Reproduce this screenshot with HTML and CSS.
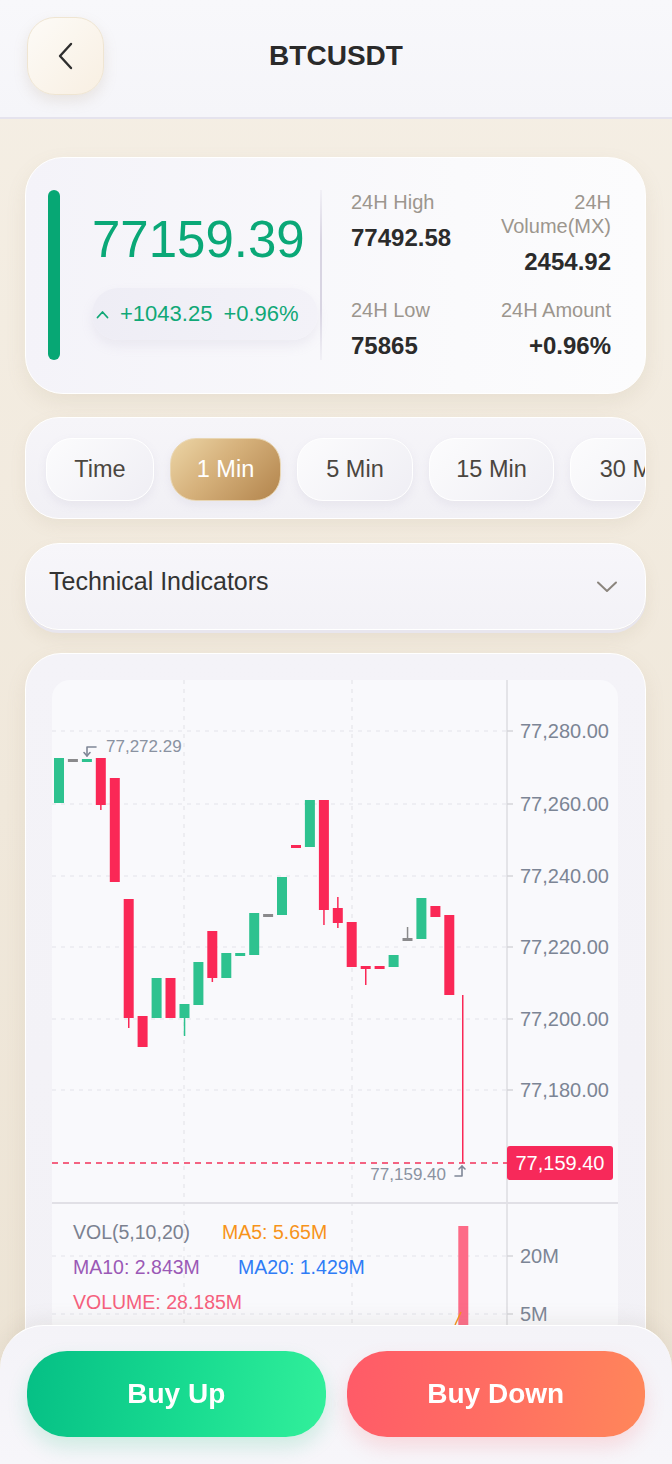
FILE: index.html
```html
<!DOCTYPE html>
<html lang="en">
  <head>
    <meta charset="UTF-8" />
    <meta name="viewport" content="width=device-width, initial-scale=1.0" />
    <title>BTCUSDT</title>
    <link rel="stylesheet" href="styles.css">
  </head>
  <body>
    <header class="topbar">
      <button class="back-btn">
        <svg width="16" height="28" viewBox="0 0 16 28"><polyline points="13,2 2,14 13,26" fill="none" stroke="#2e2e2e" stroke-width="2.4" stroke-linecap="round" stroke-linejoin="round"/></svg>
      </button>
      <h1 class="title">BTCUSDT</h1>
      <span></span>
    </header>

    <main class="page">
      <section class="price-card">
        <div class="trend-bar"></div>
        <div class="price-main">
          <div class="price">77159.39</div>
          <div class="change-pill">
            <svg width="13" height="9" viewBox="0 0 13 9"><polyline points="1.5,7.5 6.5,2 11.5,7.5" fill="none" stroke="#10a877" stroke-width="1.8" stroke-linecap="round" stroke-linejoin="round"/></svg>
            <span>+1043.25</span>
            <span>+0.96%</span>
          </div>
        </div>
        <div class="divider"></div>
        <div class="stats">
          <div class="stat">
            <div class="stat-label">24H High</div>
            <div class="stat-value">77492.58</div>
          </div>
          <div class="stat stat-right">
            <div class="stat-label">24H<br>Volume(MX)</div>
            <div class="stat-value">2454.92</div>
          </div>
          <div class="stat">
            <div class="stat-label">24H Low</div>
            <div class="stat-value">75865</div>
          </div>
          <div class="stat stat-right">
            <div class="stat-label">24H Amount</div>
            <div class="stat-value">+0.96%</div>
          </div>
        </div>
      </section>

      <section class="tabs-card">
        <div class="tabs">
          <span class="tab tab-time">Time</span>
          <span class="tab tab-1m tab-active">1 Min</span>
          <span class="tab tab-5m">5 Min</span>
          <span class="tab tab-15m">15 Min</span>
          <span class="tab tab-30m">30 Min</span>
        </div>
      </section>

      <section class="indicator-card">
        <span class="indicator-text">Technical Indicators</span>
        <svg width="22" height="14" viewBox="0 0 22 14"><polyline points="2,2.5 11,11 20,2.5" fill="none" stroke="#8b857d" stroke-width="2" stroke-linecap="round" stroke-linejoin="round"/></svg>
      </section>

      <section class="chart-card">
        <svg class="chart" width="566" height="660" viewBox="0 0 566 660">
          <rect x="0" y="0" width="566" height="660" rx="18" fill="#f9f9fc"/>

          <!-- grid -->
          <g stroke="#e4e4ea" stroke-width="1.2" stroke-dasharray="4 5">
            <line x1="0" y1="51" x2="455" y2="51"/>
            <line x1="0" y1="124" x2="455" y2="124"/>
            <line x1="0" y1="196" x2="455" y2="196"/>
            <line x1="0" y1="267" x2="455" y2="267"/>
            <line x1="0" y1="339" x2="455" y2="339"/>
            <line x1="0" y1="410" x2="455" y2="410"/>
            <line x1="0" y1="576" x2="455" y2="576"/>
            <line x1="0" y1="634" x2="455" y2="634"/>
            <line x1="132" y1="0" x2="132" y2="660"/>
            <line x1="300" y1="0" x2="300" y2="660"/>
          </g>
          <line x1="455" y1="0" x2="455" y2="660" stroke="#dddce2" stroke-width="1.5"/>
          <line x1="0" y1="523" x2="566" y2="523" stroke="#e1e0e6" stroke-width="2"/>

          <!-- axis ticks -->
          <g stroke="#d4d4da" stroke-width="1.5">
            <line x1="455" y1="51" x2="461" y2="51"/>
            <line x1="455" y1="124" x2="461" y2="124"/>
            <line x1="455" y1="196" x2="461" y2="196"/>
            <line x1="455" y1="267" x2="461" y2="267"/>
            <line x1="455" y1="339" x2="461" y2="339"/>
            <line x1="455" y1="410" x2="461" y2="410"/>
            <line x1="455" y1="576" x2="461" y2="576"/>
            <line x1="455" y1="634" x2="461" y2="634"/>
          </g>

          <!-- axis labels -->
          <g class="axis-label">
            <text x="468" y="58">77,280.00</text>
            <text x="468" y="131">77,260.00</text>
            <text x="468" y="203">77,240.00</text>
            <text x="468" y="274">77,220.00</text>
            <text x="468" y="346">77,200.00</text>
            <text x="468" y="417">77,180.00</text>
            <text x="468" y="583">20M</text>
            <text x="468" y="641">5M</text>
          </g>

          <!-- candles -->
          <g fill="#2ec28f">
            <rect x="2" y="78" width="10" height="45"/>
            <rect x="29.9" y="79" width="10" height="3"/>
            <rect x="99.6" y="298" width="10" height="40"/>
            <rect x="127.5" y="324" width="10" height="14"/>
            <rect x="131.8" y="338" width="1.5" height="18"/>
            <rect x="141.4" y="282" width="10" height="43"/>
            <rect x="169.3" y="273" width="10" height="25"/>
            <rect x="183.2" y="273" width="10" height="3"/>
            <rect x="197.2" y="233" width="10" height="42"/>
            <rect x="225" y="197" width="10" height="38"/>
            <rect x="252.9" y="120" width="10" height="47"/>
            <rect x="336.6" y="275" width="10" height="12"/>
            <rect x="364.4" y="218" width="10" height="41"/>
          </g>
          <g fill="#fa2856">
            <rect x="43.8" y="78" width="10" height="47"/>
            <rect x="48.1" y="125" width="1.5" height="5"/>
            <rect x="57.8" y="98" width="10" height="104"/>
            <rect x="71.7" y="219" width="10" height="119"/>
            <rect x="76" y="338" width="1.5" height="10"/>
            <rect x="85.6" y="336" width="10" height="31"/>
            <rect x="113.5" y="298" width="10" height="40"/>
            <rect x="155.3" y="251" width="10" height="47"/>
            <rect x="159.6" y="298" width="1.5" height="4"/>
            <rect x="239" y="165" width="10" height="3"/>
            <rect x="266.9" y="120" width="10" height="110"/>
            <rect x="271.2" y="230" width="1.5" height="15"/>
            <rect x="280.8" y="228" width="10" height="15"/>
            <rect x="285.1" y="217" width="1.5" height="31"/>
            <rect x="294.7" y="242" width="10" height="45"/>
            <rect x="308.7" y="286" width="10" height="3"/>
            <rect x="313" y="289" width="1.5" height="16"/>
            <rect x="322.6" y="286" width="10" height="3"/>
            <rect x="378.4" y="226" width="10" height="11"/>
            <rect x="392.3" y="235" width="10" height="80"/>
            <rect x="410" y="315" width="1.5" height="168"/>
          </g>
          <g fill="#8a8a8c">
            <rect x="15.9" y="79" width="10" height="3"/>
            <rect x="211.1" y="234" width="10" height="3"/>
            <rect x="350.5" y="258" width="10" height="3"/>
            <rect x="354.8" y="247" width="1.5" height="11"/>
          </g>

          <!-- high marker -->
          <g stroke="#7f8797" stroke-width="1.6" fill="none" stroke-linecap="round" stroke-linejoin="round">
            <polyline points="44,67 35,67 35,76"/>
            <polyline points="32,72.5 35,76 38,72.5"/>
          </g>
          <text class="marker-label" x="54" y="72">77,272.29</text>

          <!-- last price -->
          <line x1="0" y1="483" x2="455" y2="483" stroke="#f2325a" stroke-width="1.5" stroke-dasharray="6 5"/>
          <g stroke="#7f8797" stroke-width="1.6" fill="none" stroke-linecap="round" stroke-linejoin="round">
            <polyline points="403,496 410,496 410,486"/>
            <polyline points="407,489 410,486 413,489"/>
          </g>
          <text class="marker-label" x="394" y="500" text-anchor="end">77,159.40</text>
          <rect x="455" y="466" width="106" height="34" rx="3" fill="#f7295a"/>
          <text class="price-tag" x="508" y="490" text-anchor="middle">77,159.40</text>

          <!-- volume -->
          <rect x="406.3" y="546" width="10" height="114" fill="#fd6b87"/>
          <polyline points="403,645 409,632" fill="none" stroke="#f7931a" stroke-width="1.5"/>
          <text class="vol-text vol-gray" x="21" y="559">VOL(5,10,20)</text>
          <text class="vol-text vol-orange" x="170" y="559">MA5: 5.65M</text>
          <text class="vol-text vol-purple" x="21" y="594">MA10: 2.843M</text>
          <text class="vol-text vol-blue" x="186" y="594">MA20: 1.429M</text>
          <text class="vol-text vol-pink" x="21" y="629">VOLUME: 28.185M</text>
        </svg>
      </section>
    </main>

    <footer class="action-bar">
      <button class="btn btn-up">Buy Up</button>
      <button class="btn btn-down">Buy Down</button>
    </footer>
  </body>
</html>
```

FILE: styles.css
```css
* {
  margin: 0;
  padding: 0;
  box-sizing: border-box;
}
html,
body {
  height: 1464px;
  overflow: hidden;
}
body {
  font-family: "Liberation Sans", Arial, sans-serif;
  color: #2b2b2b;
  background: linear-gradient(180deg, #f5efe5 0%, #f0e8db 55%, #ece3d4 100%);
}
button {
  font-family: inherit;
  border: none;
  cursor: pointer;
}

/* header */
.topbar {
  height: 119px;
  display: grid;
  grid-template-columns: 77px 1fr 77px;
  align-items: start;
  padding: 17px 27px 0;
  background: linear-gradient(180deg, #f8f8fb, #f5f5f9);
  border-bottom: 2px solid #e5e3ed;
}
.back-btn {
  width: 77px;
  height: 78px;
  border-radius: 28px;
  border: 1px solid #efe5d2;
  background: linear-gradient(135deg, #fdfbf7 0%, #f8efe2 100%);
  box-shadow: 0 6px 14px rgba(170, 150, 120, 0.18);
  display: flex;
  align-items: center;
  justify-content: center;
}
.title {
  font-size: 28px;
  font-weight: 700;
  line-height: 78px;
  text-align: center;
  color: #2a2a2a;
}

.page {
  padding: 38px 26px 0 25px;
}

/* price card */
.price-card {
  height: 237px;
  display: flex;
  align-items: flex-start;
  padding: 32px 34px 0 22px;
  border-radius: 38px;
  border: 1px solid #fff;
  background: linear-gradient(90deg, #f4f3f9 0%, #fafafc 70%, #fcfcfd 100%);
  box-shadow: 0 8px 20px rgba(160, 140, 110, 0.12);
}
.trend-bar {
  width: 12px;
  height: 170px;
  border-radius: 6px;
  background: #07a774;
}
.price-main {
  width: 226px;
  margin-left: 32px;
  padding-top: 20px;
}
.price {
  font-size: 51px;
  line-height: 60px;
  color: #0aa877;
}
.change-pill {
  margin-top: 18px;
  height: 52px;
  display: flex;
  align-items: center;
  gap: 11px;
  padding-left: 4px;
  border-radius: 26px;
  background: linear-gradient(90deg, #eeedf5, #f3f2f8);
  box-shadow: 0 6px 12px rgba(170, 165, 190, 0.14);
  font-size: 22px;
  color: #10a877;
  white-space: nowrap;
}
.divider {
  width: 2px;
  height: 170px;
  margin-left: 2px;
  background: linear-gradient(180deg, rgba(214, 210, 226, 0.2), #d8d4e2 30%, #d8d4e2 70%, rgba(214, 210, 226, 0.2));
}
.stats {
  flex: 1;
  margin-left: 29px;
  display: grid;
  grid-template-columns: 1fr 1fr;
  row-gap: 22px;
}
.stat-right {
  text-align: right;
}
.stat-label {
  font-size: 20px;
  line-height: 24px;
  color: #9c968e;
}
.stat-value {
  margin-top: 10px;
  font-size: 24px;
  line-height: 28px;
  font-weight: 700;
  color: #2b2b2b;
}

/* interval tabs */
.tabs-card {
  margin-top: 23px;
  height: 102px;
  padding: 20px 0 0 20px;
  border-radius: 34px;
  border: 1px solid #fff;
  background: linear-gradient(180deg, #f6f5f9, #f1f0f5);
  box-shadow: 0 6px 16px rgba(160, 140, 110, 0.1);
  overflow: hidden;
}
.tabs {
  display: flex;
  gap: 16px;
}
.tab {
  flex: none;
  height: 63px;
  border-radius: 26px;
  border: 1px solid #fff;
  background: linear-gradient(135deg, #fcfcfd, #efeef4);
  box-shadow: 0 4px 10px rgba(160, 150, 180, 0.12);
  font-size: 23.5px;
  line-height: 61px;
  text-align: center;
  color: #4b4640;
  white-space: nowrap;
}
.tab-time {
  width: 108px;
}
.tab-1m {
  width: 111px;
}
.tab-5m {
  width: 116px;
}
.tab-15m {
  width: 125px;
}
.tab-30m {
  width: 130px;
}
.tab-active {
  border-color: #e8d6b4;
  background: linear-gradient(135deg, #ecd5a6 0%, #d5b07a 45%, #b2844c 100%);
  color: #fff;
}

/* indicators */
.indicator-card {
  margin-top: 24px;
  height: 87px;
  display: flex;
  align-items: center;
  justify-content: space-between;
  padding: 0 27px 0 23px;
  border-radius: 34px;
  border: 1px solid #fff;
  background: linear-gradient(180deg, #f7f6fa, #f3f2f7);
  box-shadow: 0 3px 0 #e8e6ee, 0 8px 16px rgba(160, 140, 110, 0.12);
}
.indicator-text {
  margin-bottom: 10px;
  font-size: 25px;
  color: #333;
}

/* chart */
.chart-card {
  margin-top: 23px;
  height: 820px;
  padding: 26px 27px 0 26px;
  border-radius: 36px;
  border: 1px solid #fff;
  background: linear-gradient(180deg, #f4f3f8, #f2f1f6);
  box-shadow: 0 8px 20px rgba(160, 140, 110, 0.12);
}
.chart {
  display: block;
}
.axis-label {
  font-size: 20px;
  fill: #7c8595;
}
.marker-label {
  font-size: 17px;
  fill: #8a92a1;
}
.price-tag {
  font-size: 20px;
  fill: #fff;
}
.vol-text {
  font-size: 19.5px;
}
.vol-gray {
  fill: #7b8190;
}
.vol-orange {
  fill: #f7931a;
}
.vol-purple {
  fill: #9b59b6;
}
.vol-blue {
  fill: #2f7cf6;
}
.vol-pink {
  fill: #f5607d;
}

/* bottom actions */
.action-bar {
  position: fixed;
  left: 0;
  right: 0;
  bottom: 0;
  height: 139px;
  display: flex;
  gap: 21px;
  padding: 25px 27px 0;
  border-radius: 44px 44px 0 0;
  border-top: 1px solid #fff;
  background: linear-gradient(180deg, #f4f3f8, #f7f6fa);
  box-shadow: 0 -6px 18px rgba(150, 140, 120, 0.12);
}
.btn {
  flex: 1;
  height: 86px;
  border-radius: 40px;
  font-size: 28px;
  font-weight: 700;
  color: #fff;
}
.btn-up {
  background: linear-gradient(100deg, #05bf85 0%, #19dc91 55%, #32f09b 100%);
  box-shadow: 0 10px 20px rgba(20, 190, 120, 0.18);
}
.btn-down {
  background: linear-gradient(100deg, #ff5a68 0%, #ff6e62 50%, #ff875a 100%);
  box-shadow: 0 10px 20px rgba(250, 90, 100, 0.18);
}
```
